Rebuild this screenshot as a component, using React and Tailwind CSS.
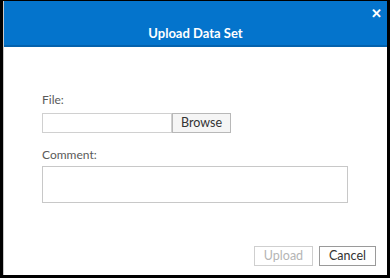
import React from 'react';

const App = () => {
  return (
    <div className="w-[390px] h-[278px] bg-black pt-[1px] pl-[3px] pr-[3px] pb-[3px]" style={{ fontFamily: 'Lato, "Open Sans", sans-serif' }}>
      <div className="flex flex-col h-full bg-white border-l border-[#c8c8c8]">
        {/* Header */}
        <div className="relative h-[46px] bg-[#0474cc] border-b-2 border-[#0462ad] flex items-end justify-center pb-[4px]">
          <span className="text-white text-[13px] font-bold leading-[16px]">Upload Data Set</span>
          <span className="absolute right-[5px] top-[4px] text-white text-[13px] font-bold leading-[16px]">✕</span>
        </div>

        {/* Body */}
        <div className="flex flex-col pl-[38px] pt-[45px]">
          <label className="text-[12px] leading-[16px] text-[#5a5a5a]">File:</label>
          <div className="flex mt-[5px]">
            <div className="w-[130px] h-[20px] border border-[#d0d0d0] bg-white" />
            <button className="w-[59px] h-[20px] border border-[#b8b8b8] bg-[#f5f5f5] text-[12.5px] leading-[16px] text-[#333]">
              Browse
            </button>
          </div>
          <label className="mt-[14px] text-[12px] leading-[16px] text-[#5a5a5a]">Comment:</label>
          <div className="mt-[3px] w-[306px] h-[37px] border border-[#c8c8c8] bg-white" />
        </div>

        {/* Footer */}
        <div className="mt-auto flex justify-end gap-[6px] pr-[11px] pb-[9px]">
          <button className="w-[59px] h-[20px] border border-[#cfcfcf] bg-white text-[12.5px] leading-[16px] text-[#b5b5b5]">
            Upload
          </button>
          <button className="w-[57px] h-[20px] border border-[#9a9a9a] bg-white text-[12.5px] leading-[16px] text-[#333]">
            Cancel
          </button>
        </div>
      </div>
    </div>
  );
};

export default App;
